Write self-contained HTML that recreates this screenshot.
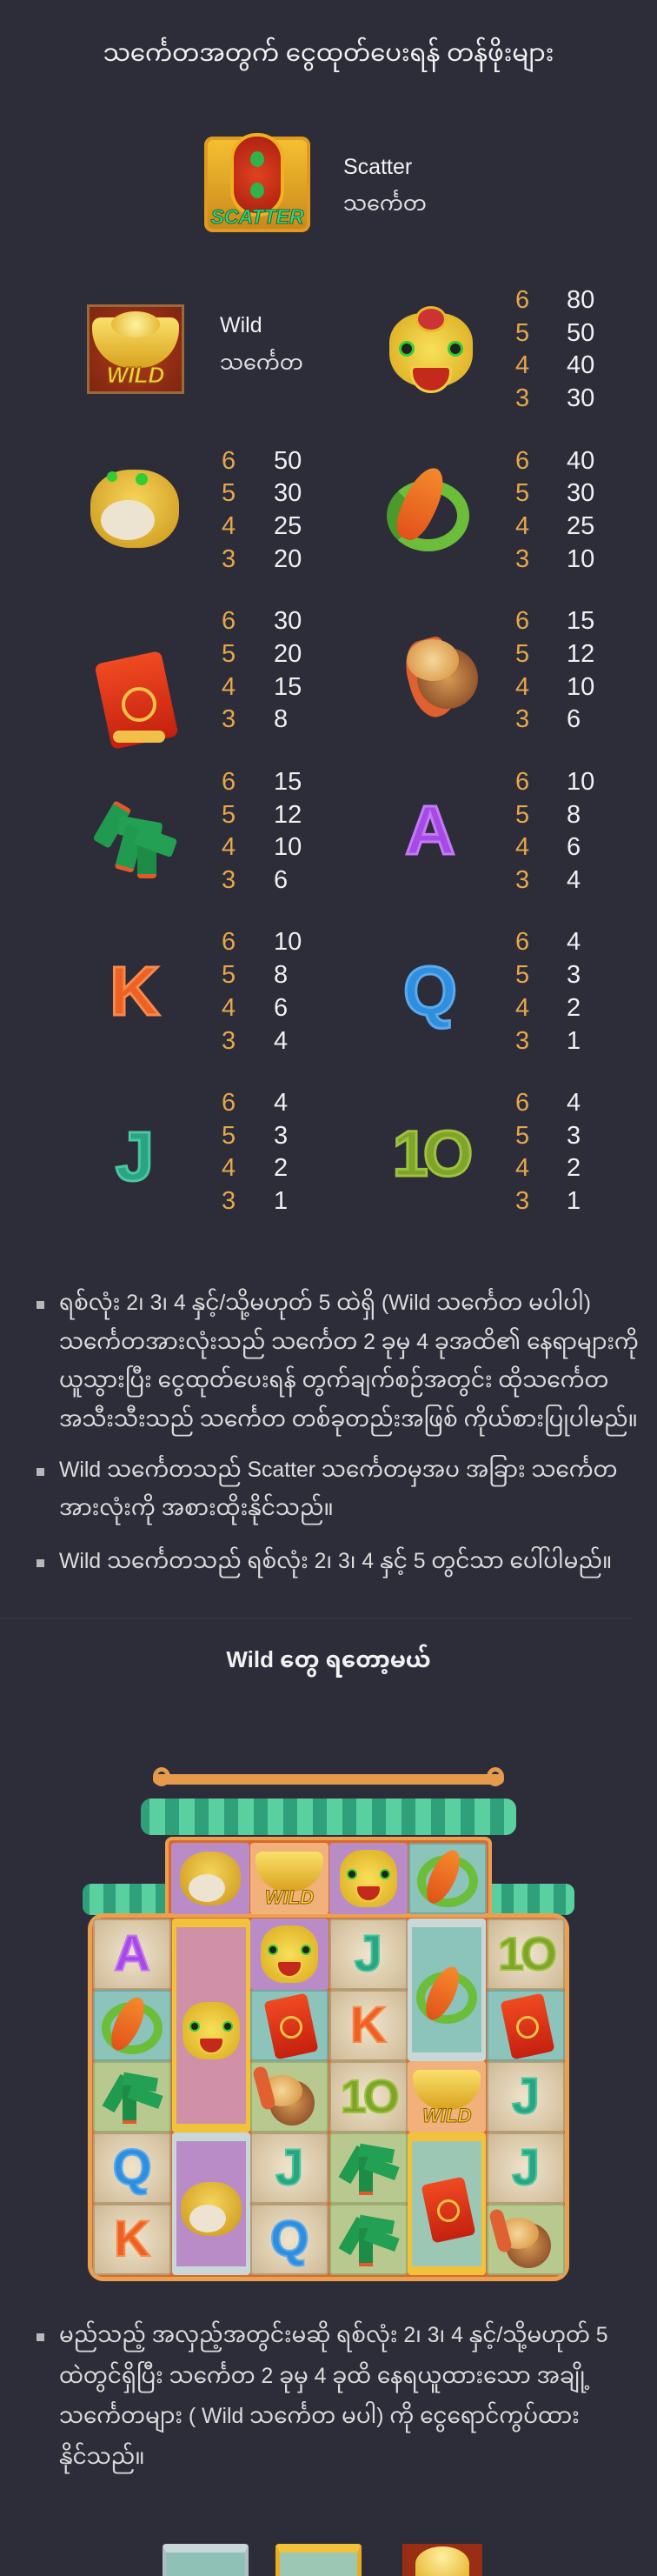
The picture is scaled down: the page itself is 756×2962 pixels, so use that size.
<!DOCTYPE html>
<html><head><meta charset="utf-8">
<style>
*{margin:0;padding:0;box-sizing:border-box}
html,body{width:756px;height:2962px;background:#2d2d3a;overflow:hidden}
body{position:relative;font-family:"Liberation Sans","Noto Sans Myanmar","Padauk","Myanmar Text",sans-serif;color:#dcdcdc}
.a{position:absolute}
.t{position:absolute;white-space:nowrap}
.n{position:absolute;font-size:29px;line-height:30px;height:30px;white-space:nowrap}
.o{color:#e6a64a}
.w{color:#f0f0f0}
.lt{position:absolute;font-weight:bold;font-family:"Liberation Sans",sans-serif;text-align:center;line-height:1}
.bul{position:absolute;width:9px;height:9px;background:#b8b8bc}
.para{position:absolute;left:68px;font-size:24.8px;color:#dcdcdc;white-space:nowrap}
.cell{position:absolute;width:90px;height:82px;border-radius:4px;overflow:hidden}
.tan{background:radial-gradient(circle,#efe4cc,#cdb793);box-shadow:inset 0 0 0 2px #b59d76}
.tea{background:#8cc3bb;box-shadow:inset 0 0 0 2px #74a8a0}
.grn{background:#b7c98f;box-shadow:inset 0 0 0 2px #9aae72}
.pur{background:#b98cc8}
.pnk{background:#cf90a8}
.org{background:#f2b07a}
</style></head><body>

<div class="t" style="left:0;width:756px;top:33px;text-align:center;font-size:27.7px;color:#f2f2f2">သင်္ကေတအတွက် ငွေထုတ်ပေးရန် တန်ဖိုးများ</div>

<!-- Scatter -->
<div class="a" style="left:235px;top:157px;width:122px;height:110px;border-radius:10px;background:linear-gradient(#f5c232,#c9861a);box-shadow:inset 0 0 0 4px #e09a20"></div>
<div class="a" style="left:265px;top:153px;width:62px;height:96px;border-radius:30px;background:radial-gradient(circle,#e0421e,#a81d10);border:4px solid #f0b020"></div>
<div class="a" style="left:288px;top:174px;width:16px;height:18px;border-radius:50%;background:#2fb34a"></div>
<div class="a" style="left:288px;top:210px;width:16px;height:18px;border-radius:50%;background:#2fb34a"></div>
<div class="lt" style="left:236px;top:238px;width:120px;font-size:23px;color:#3fd57a;font-style:italic;-webkit-text-stroke:1px #136b38">SCATTER</div>
<div class="t" style="left:395px;top:178px;font-size:25px;color:#f2f2f2">Scatter</div>
<div class="t" style="left:395px;top:210px;font-size:24px;color:#e0e0e0">သင်္ကေတ</div>

<!-- Wild row -->
<div class="a" style="left:100px;top:350px;width:112px;height:103px;background:radial-gradient(circle,#b33a1a,#7a2410);box-shadow:inset 0 0 0 3px #9a6b3a"></div>
<div class="a" style="left:106px;top:365px;width:100px;height:58px;border-radius:10px 10px 45px 45px;background:linear-gradient(#fbe06a,#d9a21e)"></div>
<div class="a" style="left:128px;top:358px;width:56px;height:30px;border-radius:50%;background:radial-gradient(circle,#fff3a0,#e2b22a)"></div>
<div class="lt" style="left:100px;top:418px;width:112px;font-size:26px;color:#f7cf3a;font-style:italic;-webkit-text-stroke:1px #8a5a10">WILD</div>
<div class="t" style="left:253px;top:360px;font-size:25px;color:#f2f2f2">Wild</div>
<div class="t" style="left:253px;top:393px;font-size:24px;color:#e0e0e0">သင်္ကေတ</div>

<!-- lion -->
<div class="a" style="left:448px;top:360px;width:96px;height:85px;border-radius:40% 40% 45% 45%;background:radial-gradient(circle,#f8e05a,#d9a81c)"></div>
<div class="a" style="left:478px;top:352px;width:36px;height:30px;border-radius:50%;background:#c33;border:3px solid #e8b82a"></div>
<div class="a" style="left:459px;top:392px;width:18px;height:18px;border-radius:50%;background:#222;border:3px solid #3c3"></div>
<div class="a" style="left:515px;top:392px;width:18px;height:18px;border-radius:50%;background:#222;border:3px solid #3c3"></div>
<div class="a" style="left:472px;top:420px;width:48px;height:32px;border-radius:6px 6px 24px 24px;background:#c42a1c;border:3px solid #f0d040"></div>

<div id="pt"></div>

<!-- Toad -->
<div class="a" style="left:104px;top:540px;width:102px;height:90px;border-radius:45%;background:radial-gradient(circle at 50% 40%,#f6d55a,#c99418)"></div>
<div class="a" style="left:116px;top:575px;width:62px;height:46px;border-radius:50%;background:#ece4d0"></div>
<div class="a" style="left:123px;top:542px;width:12px;height:12px;border-radius:50%;background:#3c3"></div>
<div class="a" style="left:156px;top:544px;width:14px;height:14px;border-radius:50%;background:#3c3"></div>
<!-- Fish -->
<div class="a" style="left:445px;top:552px;width:95px;height:82px;border-radius:50%;border:14px solid #6cbd3a;border-left-color:#4a9a2c"></div>
<div class="a" style="left:465px;top:535px;width:38px;height:88px;border-radius:50% 50% 40% 40%;background:linear-gradient(#f48a2c,#e2521a);transform:rotate(25deg)"></div>
<!-- Envelope -->
<div class="a" style="left:118px;top:755px;width:78px;height:100px;border-radius:8px;background:linear-gradient(#f04a22,#c5200e);transform:rotate(-12deg)"></div>
<div class="a" style="left:140px;top:790px;width:40px;height:40px;border-radius:50%;border:4px solid #f0c048"></div>
<div class="a" style="left:130px;top:840px;width:60px;height:14px;border-radius:7px;background:#f0c048"></div>
<!-- Gong -->
<div class="a" style="left:470px;top:735px;width:50px;height:90px;border-radius:50% 10px 30px 50%;background:#e06032;transform:rotate(-15deg)"></div>
<div class="a" style="left:480px;top:745px;width:70px;height:70px;border-radius:50%;background:radial-gradient(circle,#d79a56,#7a3a1a)"></div>
<div class="a" style="left:468px;top:735px;width:60px;height:48px;border-radius:50%;background:radial-gradient(circle,#f6d79a,#d38a36)"></div>
<!-- Firecrackers -->
<div class="a" style="left:118px;top:922px;width:22px;height:52px;border-radius:4px;background:#1f9a4e;transform:rotate(30deg);border-top:5px solid #e05a2a"></div>
<div class="a" style="left:150px;top:928px;width:22px;height:50px;border-radius:4px;background:#23a053;transform:rotate(-80deg)"></div>
<div class="a" style="left:138px;top:950px;width:22px;height:52px;border-radius:4px;background:#1f9a4e;transform:rotate(15deg);border-bottom:5px solid #e05a2a"></div>
<div class="a" style="left:158px;top:958px;width:22px;height:52px;border-radius:4px;background:#1c8c46;border-bottom:5px solid #e05a2a"></div>
<div class="a" style="left:168px;top:945px;width:22px;height:46px;border-radius:4px;background:#23a053;transform:rotate(-70deg)"></div>

<!-- Letters -->
<div class="lt" style="left:440px;top:915px;width:110px;font-size:80px;color:#a64ae6;-webkit-text-stroke:3px #c57af5">A</div>
<div class="lt" style="left:100px;top:1100px;width:110px;font-size:80px;color:#ee6024;-webkit-text-stroke:3px #f58a4a">K</div>
<div class="lt" style="left:440px;top:1100px;width:110px;font-size:80px;color:#2f8ede;-webkit-text-stroke:3px #5aaaee">Q</div>
<div class="lt" style="left:100px;top:1290px;width:110px;font-size:80px;color:#2aa584;-webkit-text-stroke:3px #4cc6a0">J</div>
<div class="lt" style="left:430px;top:1290px;width:130px;font-size:74px;color:#7fa42a;-webkit-text-stroke:3px #9cc23e;letter-spacing:-6px">1O</div>

<!-- Bullets 1 -->
<div class="bul" style="left:42px;top:1496px"></div>
<div class="para" style="top:1477px;line-height:44.5px">ရစ်လုံး 2၊ 3၊ 4 နှင့်/သို့မဟုတ် 5 ထဲရှိ (Wild သင်္ကေတ မပါပါ)<br>သင်္ကေတအားလုံးသည် သင်္ကေတ 2 ခုမှ 4 ခုအထိ၏ နေရာများကို<br>ယူသွားပြီး ငွေထုတ်ပေးရန် တွက်ချက်စဉ်အတွင်း ထိုသင်္ကေတ<br>အသီးသီးသည် သင်္ကေတ တစ်ခုတည်းအဖြစ် ကိုယ်စားပြုပါမည်။</div>
<div class="bul" style="left:42px;top:1688px"></div>
<div class="para" style="top:1669px;line-height:44px">Wild သင်္ကေတသည် Scatter သင်္ကေတမှအပ အခြား သင်္ကေတ<br>အားလုံးကို အစားထိုးနိုင်သည်။</div>
<div class="bul" style="left:42px;top:1793px"></div>
<div class="para" style="top:1774px;line-height:44px">Wild သင်္ကေတသည် ရစ်လုံး 2၊ 3၊ 4 နှင့် 5 တွင်သာ ပေါ်ပါမည်။</div>

<div class="a" style="left:0;top:1860px;width:728px;height:1px;background:#3a3a48"></div>
<div class="t" style="left:0;width:756px;top:1884px;text-align:center;font-size:26px;font-weight:bold;color:#f2f2f2">Wild တွေ ရတော့မယ်</div>

<!-- Board -->
<div class="a" style="left:176px;top:2040px;width:404px;height:12px;border-radius:6px;background:#e59a4c"></div>
<div class="a" style="left:176px;top:2032px;width:20px;height:22px;border-radius:50%;border:5px solid #e59a4c"></div>
<div class="a" style="left:560px;top:2032px;width:20px;height:22px;border-radius:50%;border:5px solid #e59a4c"></div>
<div class="a" style="left:162px;top:2068px;width:432px;height:42px;border-radius:12px;background:repeating-linear-gradient(90deg,#2fa07a 0 10px,#5ad0a0 10px 28px,#2fa07a 28px 34px)"></div>
<div class="a" style="left:95px;top:2166px;width:108px;height:36px;border-radius:10px;background:repeating-linear-gradient(90deg,#2fa07a 0 8px,#5ad0a0 8px 24px,#2fa07a 24px 30px)"></div>
<div class="a" style="left:553px;top:2166px;width:108px;height:36px;border-radius:10px;background:repeating-linear-gradient(90deg,#2fa07a 0 8px,#5ad0a0 8px 24px,#2fa07a 24px 30px)"></div>
<div class="a" style="left:190px;top:2112px;width:376px;height:96px;background:#d86a2e;border:4px solid #eba050;border-bottom:none;border-radius:8px 8px 0 0"></div>
<div class="a" style="left:101px;top:2200px;width:554px;height:423px;border-radius:18px;background:#d86a2e;border:5px solid #eba050"></div>

<div id="board"></div>

<!-- Last bullet -->
<div class="bul" style="left:42px;top:2683px"></div>
<div class="para" style="top:2663px;line-height:46.7px">မည်သည့် အလှည့်အတွင်းမဆို ရစ်လုံး 2၊ 3၊ 4 နှင့်/သို့မဟုတ် 5<br>ထဲတွင်ရှိပြီး သင်္ကေတ 2 ခုမှ 4 ခုထိ နေရယူထားသော အချို့<br>သင်္ကေတများ ( Wild သင်္ကေတ မပါ) ကို ငွေရောင်ကွပ်ထား<br>နိုင်သည်။</div>

<!-- bottom icons -->
<div class="a" style="left:187px;top:2925px;width:99px;height:40px;background:#8fc1b6;border-top:10px solid #c9d7d9;border-left:4px solid #aebfc2;border-right:4px solid #aebfc2;border-radius:4px 4px 0 0"></div>
<div class="a" style="left:317px;top:2925px;width:99px;height:40px;background:#9cc7b4;border-top:10px solid #f2c23a;border-left:5px solid #e7ad22;border-right:5px solid #e7ad22;border-radius:4px 4px 0 0"></div>
<div class="a" style="left:463px;top:2925px;width:92px;height:40px;background:#9a2e14"></div>
<div class="a" style="left:478px;top:2928px;width:62px;height:40px;border-radius:50% 50% 0 0;background:radial-gradient(circle at 50% 30%,#fff0a0,#e4b228)"></div>

<script>
(function(){
var pt=[
 [null,[80,50,40,30]],
 [[50,30,25,20],[40,30,25,10]],
 [[30,20,15,8],[15,12,10,6]],
 [[15,12,10,6],[10,8,6,4]],
 [[10,8,6,4],[4,3,2,1]],
 [[4,3,2,1],[4,3,2,1]]];
var h='';
pt.forEach(function(r,i){
 var y0=345+184.6*i;
 [[255,315],[593,652]].forEach(function(x,j){
  var v=r[j]; if(!v)return;
  for(var k=0;k<4;k++){var y=y0+37.7*k-15;
   h+='<div class="n o" style="left:'+x[0]+'px;top:'+y+'px">'+(6-k)+'</div>';
   h+='<div class="n w" style="left:'+x[1]+'px;top:'+y+'px">'+v[k]+'</div>';}
 });
});
document.getElementById('pt').innerHTML=h;

function sym(t){
 switch(t){
 case 'A':return '<div class="lt" style="left:0;top:12px;width:90px;font-size:58px;color:#a64ae6;-webkit-text-stroke:2px #c57af5">A</div>';
 case 'K':return '<div class="lt" style="left:0;top:12px;width:90px;font-size:58px;color:#ee6024;-webkit-text-stroke:2px #f58a4a">K</div>';
 case 'Q':return '<div class="lt" style="left:0;top:12px;width:90px;font-size:58px;color:#2f8ede;-webkit-text-stroke:2px #5aaaee">Q</div>';
 case 'J':return '<div class="lt" style="left:0;top:12px;width:90px;font-size:58px;color:#2aa584;-webkit-text-stroke:2px #4cc6a0">J</div>';
 case 'T':return '<div class="lt" style="left:0;top:14px;width:90px;font-size:54px;color:#7fa42a;-webkit-text-stroke:2px #9cc23e;letter-spacing:-4px">1O</div>';
 case 'L':return '<div class="a" style="left:12px;top:8px;width:66px;height:66px;border-radius:40%;background:radial-gradient(circle,#f8e05a,#d9a81c)"></div><div class="a" style="left:30px;top:48px;width:30px;height:20px;border-radius:4px 4px 15px 15px;background:#c42a1c;border:2px solid #f0d040"></div><div class="a" style="left:20px;top:30px;width:12px;height:12px;border-radius:50%;background:#222;border:2px solid #3c3"></div><div class="a" style="left:58px;top:30px;width:12px;height:12px;border-radius:50%;background:#222;border:2px solid #3c3"></div>';
 case 'F':return '<div class="a" style="left:10px;top:14px;width:70px;height:60px;border-radius:50%;border:10px solid #6cbd3a"></div><div class="a" style="left:26px;top:6px;width:28px;height:66px;border-radius:50%;background:linear-gradient(#f48a2c,#e2521a);transform:rotate(25deg)"></div>';
 case 'E':return '<div class="a" style="left:22px;top:8px;width:50px;height:68px;border-radius:6px;background:linear-gradient(#f04a22,#c5200e);transform:rotate(-12deg)"></div><div class="a" style="left:34px;top:30px;width:26px;height:26px;border-radius:50%;border:3px solid #f0c048"></div>';
 case 'G':return '<div class="a" style="left:22px;top:22px;width:52px;height:52px;border-radius:50%;background:radial-gradient(circle,#d79a56,#7a3a1a)"></div><div class="a" style="left:12px;top:16px;width:48px;height:36px;border-radius:50%;background:radial-gradient(circle,#f6d79a,#d38a36)"></div><div class="a" style="left:8px;top:6px;width:16px;height:50px;border-radius:8px;background:#e06032;transform:rotate(-15deg)"></div>';
 case 'C':return '<div class="a" style="left:20px;top:16px;width:16px;height:42px;background:#1f9a4e;transform:rotate(30deg)"></div><div class="a" style="left:46px;top:4px;width:16px;height:40px;background:#23a053;transform:rotate(-80deg)"></div><div class="a" style="left:34px;top:28px;width:16px;height:44px;background:#1c8c46;border-bottom:4px solid #e05a2a"></div><div class="a" style="left:52px;top:22px;width:16px;height:38px;background:#23a053;transform:rotate(-70deg)"></div>';
 case 'W':return '<div class="a" style="left:6px;top:10px;width:78px;height:46px;border-radius:8px 8px 36px 36px;background:linear-gradient(#fbe06a,#d9a21e)"></div><div class="lt" style="left:0;top:52px;width:90px;font-size:22px;color:#f7cf3a;font-style:italic;-webkit-text-stroke:1px #8a5a10">WILD</div>';
 case 'D':return '<div class="a" style="left:10px;top:10px;width:70px;height:62px;border-radius:45%;background:radial-gradient(circle at 50% 40%,#f6d55a,#c99418)"></div><div class="a" style="left:20px;top:36px;width:42px;height:32px;border-radius:50%;background:#ece4d0"></div>';
 }
 return '';
}
var cls={A:'tan',K:'tan',Q:'tan',J:'tan',T:'tan',L:'pur',F:'tea',E:'tea',G:'grn',C:'grn',W:'org',D:'pur'};
var b='';
['D','W','L','F'].forEach(function(s,i){
 var c={D:'pur',W:'org',L:'pur',F:'tea'}[s];
 b+='<div class="cell '+c+'" style="left:'+(197+91*i)+'px;top:2119px;height:82px">'+sym(s)+'</div>';
});
var g=[['A',null,'L','J',null,'T'],['F',null,'E','K',null,'E'],['C',null,'G','T','W','J'],['Q',null,'J','C',null,'J'],['K',null,'Q','C',null,'G']];
var X=107,Y=2206,CW=90.6,CH=82;
g.forEach(function(r,ri){r.forEach(function(s,ci){
 if(!s)return;
 b+='<div class="cell '+cls[s]+'" style="left:'+(X+CW*ci)+'px;top:'+(Y+CH*ri)+'px">'+sym(s)+'</div>';
});});
function frame(x,y,h,col,bg,s){
 return '<div class="a" style="left:'+x+'px;top:'+y+'px;width:90px;height:'+h+'px;background:'+bg+';border:5px solid '+col+';border-top-width:10px;border-bottom-width:10px;border-radius:4px">'+'<div class="a" style="left:-5px;top:'+(h/2-45)+'px;width:90px;height:82px">'+sym(s)+'</div></div>';
}
b+=frame(X+CW,Y,CH*3,'#f2c23a','#cf90a8','L');
b+=frame(X+CW,Y+CH*3,CH*2,'#c9d7d9','#b98cc8','D');
b+=frame(X+CW*4,Y,CH*2,'#c9d7d9','#8cc3bb','F');
b+=frame(X+CW*4,Y+CH*3,CH*2,'#f2c23a','#9cc7b4','E');
document.getElementById('board').innerHTML=b;
})();
</script>
</body></html>
